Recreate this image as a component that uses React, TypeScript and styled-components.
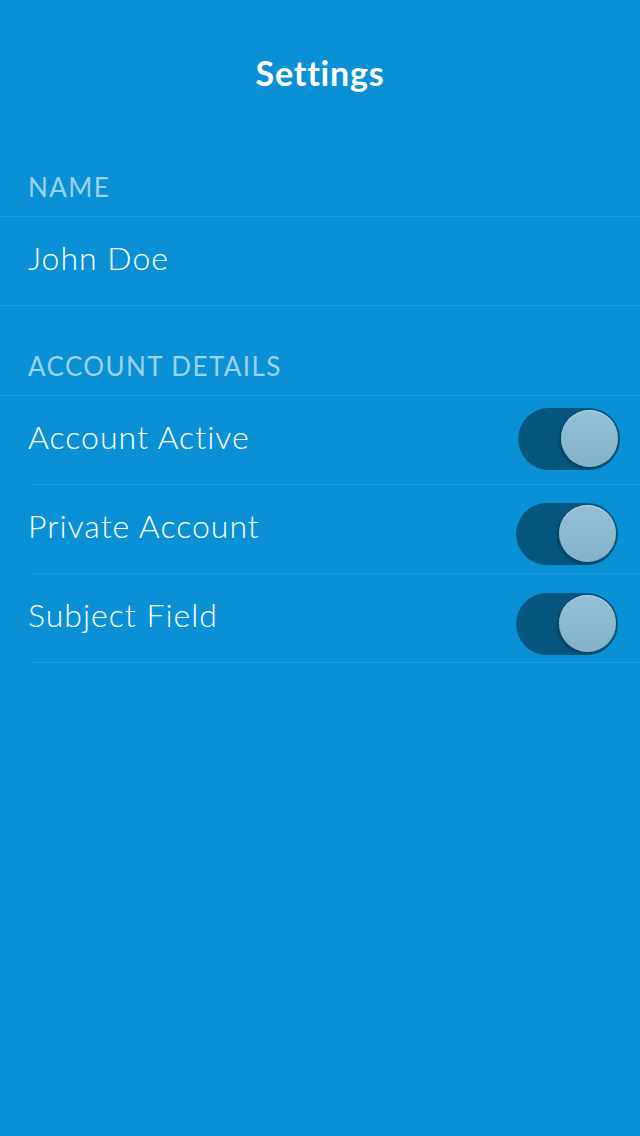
import React from "react";
import styled, { createGlobalStyle } from "styled-components";

const Global = createGlobalStyle`
  html, body { margin: 0; padding: 0; background: #0a91d5; }
  body { font-family: "Lato", "Open Sans", sans-serif; -webkit-font-smoothing: antialiased; }
  * { box-sizing: border-box; }
`;

const Screen = styled.div`
  width: 640px;
  min-height: 1136px;
  background: #0a91d5;
  color: #ffffff;
  display: flex;
  flex-direction: column;
`;

const NavBar = styled.header`
  height: 147px;
  padding-bottom: 1px;
  display: flex;
  align-items: center;
  justify-content: center;
`;

const Title = styled.h1`
  margin: 0;
  font-size: 34px;
  font-weight: 700;
  letter-spacing: 0.8px;
  line-height: 40px;
`;

const SectionHeader = styled.div<{ $top: number }>`
  padding: ${(p) => p.$top}px 28px 14px;
  font-size: 26px;
  line-height: 30px;
  font-weight: 400;
  letter-spacing: 1.4px;
  color: rgba(255, 255, 255, 0.6);
  text-transform: uppercase;
`;

const Group = styled.div`
  border-top: 1px solid rgba(255, 255, 255, 0.09);
  display: flex;
  flex-direction: column;
`;

const Row = styled.div<{ $inset: boolean }>`
  position: relative;
  height: 89px;
  display: flex;
  align-items: center;
  justify-content: space-between;
  padding-left: 28px;
  &::after {
    content: "";
    position: absolute;
    left: ${(p) => (p.$inset ? 30 : 0)}px;
    right: 0;
    bottom: 0;
    height: 1px;
    background: rgba(255, 255, 255, 0.09);
  }
`;

const Label = styled.span`
  font-size: 32px;
  font-weight: 300;
  letter-spacing: 1px;
  line-height: 36px;
  margin-top: -7px;
`;

const Track = styled.div<{ $right: number; $drop: number }>`
  width: 102px;
  height: 62px;
  margin-right: ${(p) => p.$right}px;
  margin-top: ${(p) => p.$drop}px;
  border-radius: 31px;
  background: #06577f;
  display: flex;
  align-items: center;
  justify-content: flex-end;
  padding-right: 2px;
`;

const Knob = styled.div`
  width: 57px;
  height: 57px;
  border-radius: 50%;
  background: linear-gradient(#95c1d6, #84b2c8);
  box-shadow: -2px 2px 3px rgba(0, 0, 0, 0.25), inset 0 1px 0 rgba(255, 255, 255, 0.35);
`;

const Toggle = ({ right, drop }: { right: number; drop: number }) => (
  <Track $right={right} $drop={drop}>
    <Knob />
  </Track>
);

const toggles = [
  { label: "Account Active", right: 20, drop: -4 },
  { label: "Private Account", right: 22, drop: 8 },
  { label: "Subject Field", right: 22, drop: 10 },
];

export default function App() {
  return (
    <>
      <Global />
      <Screen>
        <NavBar>
          <Title>Settings</Title>
        </NavBar>
        <SectionHeader $top={25}>Name</SectionHeader>
        <Group>
          <Row $inset={false}>
            <Label>John Doe</Label>
          </Row>
        </Group>
        <SectionHeader $top={45}>Account Details</SectionHeader>
        <Group>
          {toggles.map((t) => (
            <Row key={t.label} $inset={true}>
              <Label>{t.label}</Label>
              <Toggle right={t.right} drop={t.drop} />
            </Row>
          ))}
        </Group>
      </Screen>
    </>
  );
}
